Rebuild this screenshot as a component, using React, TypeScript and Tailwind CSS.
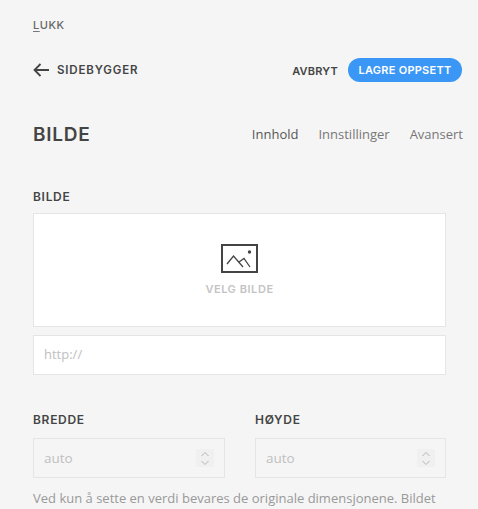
import React from 'react';

const heading = 'font-["Inter",sans-serif]';

function Spinner() {
  return (
    <div className="flex h-[18px] w-[18px] flex-col items-center justify-center gap-[3px] bg-[#f0f0f0]">
      <svg width="10" height="6" viewBox="0 0 10 6" fill="none" stroke="#b5b5b5" strokeWidth="1">
        <path d="M1.5 5 L5 1.5 L8.5 5" />
      </svg>
      <svg width="10" height="6" viewBox="0 0 10 6" fill="none" stroke="#b5b5b5" strokeWidth="1">
        <path d="M1.5 1 L5 4.5 L8.5 1" />
      </svg>
    </div>
  );
}

function SizeField({ label }: { label: string }) {
  return (
    <div>
      <div className={`${heading} text-[12px] leading-[16px] font-semibold tracking-[0.7px] text-[#444]`}>{label}</div>
      <div className="mt-[10px] flex h-[40px] items-center justify-between border border-[#e5e5e5] pr-[10px] pl-[10px]">
        <span className="text-[13.5px] text-[#c0c0c0]">auto</span>
        <Spinner />
      </div>
    </div>
  );
}

export default function App() {
  return (
    <div className='h-[509px] w-[478px] overflow-hidden bg-[#f5f5f5] pl-[33px] font-["Open_Sans",sans-serif] text-[#777]'>
      <div className={`${heading} pt-[17px] text-[11px] leading-[16px] font-medium tracking-[0.5px] text-[#666]`}>
        <span className="underline decoration-[#777] underline-offset-2">L</span>UKK
      </div>

      <div className="mt-[19px] flex h-[36px] w-[429px] items-center justify-between">
        <div className="flex items-center">
          <svg width="16" height="14" viewBox="0 0 16 14" fill="none" stroke="#444" strokeWidth="1.8">
            <path d="M16 7 H1.5 M7.5 1 L1.5 7 L7.5 13" />
          </svg>
          <span className={`${heading} mt-[1px] ml-[8px] text-[11.5px] font-semibold tracking-[0.85px] text-[#444]`}>SIDEBYGGER</span>
        </div>
        <div className="flex items-center">
          <span className={`${heading} mt-[2px] text-[11px] font-semibold tracking-[0.2px] text-[#444]`}>AVBRYT</span>
          <span className={`${heading} ml-[10px] flex h-[24px] w-[114px] items-center justify-center rounded-full bg-[#3b97f6] text-[11px] font-semibold tracking-[0.25px] text-white`}>
            LAGRE OPPSETT
          </span>
        </div>
      </div>

      <div className="mt-[33px] flex h-[28px] w-[430px] items-center justify-between">
        <div className={`${heading} text-[19px] font-semibold tracking-[0.75px] text-[#444]`}>BILDE</div>
        <div className="flex gap-[20px] text-[13px]">
          <span className="text-[#555]">Innhold</span>
          <span>Innstillinger</span>
          <span>Avansert</span>
        </div>
      </div>

      <div className={`${heading} mt-[40px] text-[12px] leading-[16px] font-semibold tracking-[0.7px] text-[#444]`}>BILDE</div>

      <div className="mt-[8px] flex h-[114px] w-[413px] flex-col items-center border border-[#e5e5e5] bg-white pt-[30px]">
        <svg width="37" height="30" viewBox="0 0 37 30" fill="none" stroke="#444">
          <rect x="1" y="1" width="35" height="27" strokeWidth="2" />
          <path d="M6 20 L12.5 12 L22 23 M18 18 L23 14.5 L29 23" strokeWidth="1.3" />
          <circle cx="28.5" cy="8" r="1.7" fill="#444" stroke="none" />
        </svg>
        <div className={`${heading} mt-[7px] text-[11px] font-semibold tracking-[0.55px] text-[#c4c4c4]`}>VELG BILDE</div>
      </div>

      <div className="mt-[8px] flex h-[40px] w-[413px] items-center border border-[#e5e5e5] bg-white pl-[10px] text-[13px] text-[#c0c0c0]">
        http://
      </div>

      <div className="mt-[37px] grid w-[413px] grid-cols-[192px_191px] gap-[30px]">
        <SizeField label="BREDDE" />
        <SizeField label="HØYDE" />
      </div>

      <p className="mt-[10px] w-[430px] text-[13px] leading-[20px] whitespace-nowrap text-[#999]">
        Ved kun å sette en verdi bevares de originale dimensjonene. Bildet
      </p>
    </div>
  );
}
